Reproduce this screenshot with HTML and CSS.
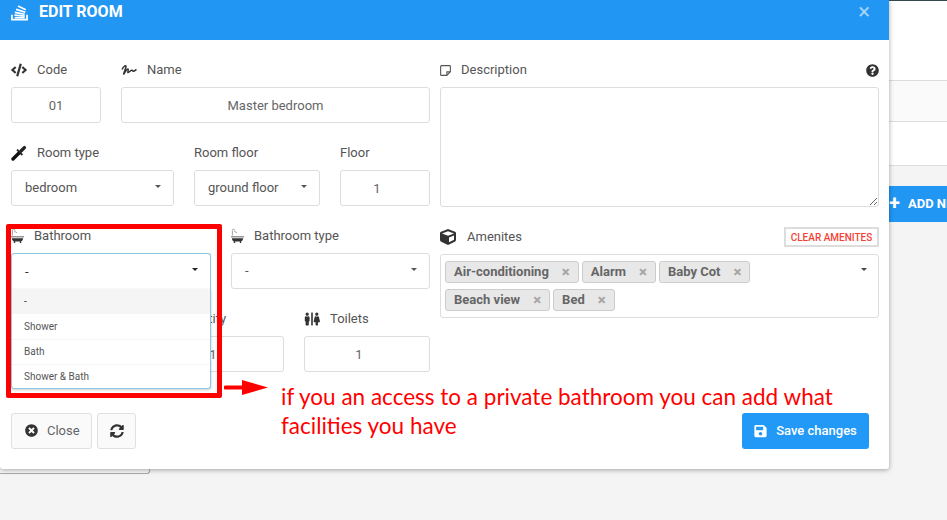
FILE: index.html
```html
<!DOCTYPE html>
<html lang="en">
<head>
<meta charset="utf-8">
<title>Edit room</title>
<link rel="stylesheet" href="styles.css">
</head>
<body>
<div class="stage">
  <div class="main">
    <section class="modal">
      <header class="modal-head">
        <svg class="head-icon" viewBox="0 0 18 17"><path d="M1 11v5h16v-5" fill="none" stroke="#fff" stroke-width="1.8"/><path d="M4 14h10.500M3.600 11.300l11 1M4 8.400l10.600 2M5.400 5.200l9.800 3M7.400 1.600l8.200 4" fill="none" stroke="#fff" stroke-width="1.700"/></svg>
        <h1 class="modal-title">EDIT ROOM</h1>
        <span class="modal-close">×</span>
      </header>
      <div class="modal-body">
        <div class="columns">
          <div class="col-left">
            <div class="row">
              <div class="field w90">
                <div class="label"><svg class="ico" viewBox="0 0 640 512"><path d="M278.9 511.5l-61-17.7c-6.4-1.8-10-8.5-8.2-14.9L346.2 8.7c1.8-6.4 8.5-10 14.9-8.2l61 17.7c6.4 1.8 10 8.5 8.2 14.9L293.8 503.3c-1.9 6.4-8.5 10.1-14.9 8.2zm-114-112.2l43.5-46.4c4.6-4.9 4.3-12.7-.8-17.2L117 256l90.6-79.7c5.1-4.5 5.5-12.3.8-17.2l-43.5-46.4c-4.5-4.8-12.1-5.1-17-.5L3.8 247.2c-5.1 4.7-5.1 12.8 0 17.5l144.1 135.1c4.9 4.6 12.5 4.4 17-.5zm327.2.6l144.1-135.1c5.1-4.7 5.1-12.8 0-17.5L492.1 112.1c-4.8-4.5-12.4-4.3-17 .5L431.6 159c-4.6 4.9-4.3 12.7.8 17.2L523 256l-90.6 79.7c-5.1 4.5-5.5 12.3-.8 17.2l43.5 46.4c4.5 4.9 12.1 5.1 17 .6z"/></svg><span>Code</span></div>
                <div class="box center">01</div>
              </div>
              <div class="field grow">
                <div class="label"><svg class="ico" viewBox="0 0 16 12"><path d="M1 5.500C2.500 2.500 4.500 1 5 2S3 8 2.500 10.500C4 8 6 4.500 7 5s-.8 3.500 0 3.500S10 6 11 6.200s.6 1.300 1.500 1S14.500 6 15.500 5.500" fill="none" stroke="#333" stroke-width="1.500"/></svg><span>Name</span></div>
                <div class="box center">Master bedroom</div>
              </div>
            </div>
            <div class="row">
              <div class="field w163">
                <div class="label"><svg class="ico-drop" viewBox="0 0 16 16"><path d="M2 14L8 8" stroke="#111" stroke-width="3.400" stroke-linecap="round" fill="none"/><path d="M6 4.600l5.400 5.400" stroke="#222" stroke-width="1.800" fill="none"/><path d="M10 6l3.400-3.400" stroke="#222" stroke-width="3.400" stroke-linecap="round" fill="none"/></svg><span>Room type</span></div>
                <div class="box select">bedroom<i class="caret"></i></div>
              </div>
              <div class="field w126">
                <div class="label"><span>Room floor</span></div>
                <div class="box select">ground floor<i class="caret"></i></div>
              </div>
              <div class="field grow">
                <div class="label"><span>Floor</span></div>
                <div class="box center number">1</div>
              </div>
            </div>
            <div class="row">
              <div class="field w200">
                <div class="label bath"><svg class="ico-bath" viewBox="0 0 14 16"><path d="M1.500 8V2.500a1.300 1.300 0 0 1 2.600 0" fill="none" stroke="#999" stroke-width="1"/><path d="M3.500 3.500l3 1.500" stroke="#999" fill="none"/><path d="M0 9h14v1H0zM1 11h12c0 2-1 3.500-3 3.500H4C2 14.500 1 13 1 11zM3 14.500h1.500V16H3zM9.500 14.500H11V16H9.500z" fill="#333"/></svg><span>Bathroom</span></div>
                <div class="box select focus">-<i class="caret dark"></i></div>
                <ul class="menu">
                  <li class="menu-item active">-</li>
                  <li class="menu-item">Shower</li>
                  <li class="menu-item">Bath</li>
                  <li class="menu-item">Shower &amp; Bath</li>
                </ul>
              </div>
              <div class="field grow">
                <div class="label bath"><svg class="ico-bath" viewBox="0 0 14 16"><path d="M1.500 8V2.500a1.300 1.300 0 0 1 2.600 0" fill="none" stroke="#999" stroke-width="1"/><path d="M3.500 3.500l3 1.500" stroke="#999" fill="none"/><path d="M0 9h14v1H0zM1 11h12c0 2-1 3.500-3 3.500H4C2 14.500 1 13 1 11zM3 14.500h1.500V16H3zM9.500 14.500H11V16H9.500z" fill="#333"/></svg><span>Bathroom type</span></div>
                <div class="box select">-<i class="caret"></i></div>
              </div>
            </div>
            <div class="row">
              <div class="field w127">
                <div class="label"></div>
                <div class="box center number"></div>
              </div>
              <div class="field w126">
                <div class="label qty"><span>Quantity</span></div>
                <div class="box center number">1</div>
              </div>
              <div class="field grow">
                <div class="label"><svg class="ico" viewBox="0 0 640 512"><path d="M128 128c35.300 0 64-28.700 64-64S163.300 0 128 0 64 28.700 64 64s28.700 64 64 64zm384 0c35.300 0 64-28.700 64-64S547.300 0 512 0s-64 28.700-64 64 28.700 64 64 64zm127.300 226.500l-45.600-185.800c-3.300-13.500-15.500-23-29.800-24.200-15 9.700-32.800 15.500-52 15.500-19.200 0-37-5.800-52-15.500-14.300 1.200-26.500 10.700-29.800 24.200l-45.600 185.800C381 369.600 393 384 409.200 384H464v104c0 13.300 10.700 24 24 24h48c13.300 0 24-10.700 24-24V384h54.800c16.200 0 28.200-14.400 24.500-29.500zM336 0h-32c-8.800 0-16 7.200-16 16v480c0 8.800 7.200 16 16 16h32c8.800 0 16-7.200 16-16V16c0-8.800-7.200-16-16-16zM180.100 144.400c-15 9.800-32.900 15.600-52.100 15.600-19.200 0-37.100-5.800-52.100-15.600C51.300 146.500 32 166.900 32 192v136c0 13.300 10.700 24 24 24h8v136c0 13.300 10.700 24 24 24h80c13.300 0 24-10.700 24-24V352h8c13.300 0 24-10.700 24-24V192c0-25.100-19.300-45.500-43.900-47.600z"/></svg><span>Toilets</span></div>
                <div class="box center number">1</div>
              </div>
            </div>
          </div>
          <div class="col-right">
            <div class="field">
              <div class="label spread">
                <span class="label-main"><svg class="ico-note" viewBox="0 0 12 12"><path d="M1.500.7h9a.8.8 0 0 1 .8.800V7.500L7.500 11.300h-6a.8.8 0 0 1-.8-.8v-9a.8.8 0 0 1 .8-.8zM11 7.500H7.500V11" fill="none" stroke="#555" stroke-width="1.200"/></svg><span>Description</span></span>
                <svg class="ico-help" viewBox="0 0 512 512"><path d="M504 256c0 136.997-111.043 248-248 248S8 392.997 8 256C8 119.083 119.043 8 256 8s248 111.083 248 248zM262.655 90c-54.497 0-89.255 22.957-116.549 63.758-3.536 5.286-2.353 12.415 2.715 16.258l34.699 26.310c5.205 3.947 12.621 3.008 16.665-2.122 17.864-22.658 30.113-35.797 57.303-35.797 20.429 0 45.698 13.148 45.698 32.958 0 14.976-12.363 22.667-32.534 33.976C247.128 238.528 216 254.941 216 296v4c0 6.627 5.373 12 12 12h56c6.627 0 12-5.373 12-12v-1.333c0-28.462 83.186-29.647 83.186-106.667 0-58.002-60.165-102-116.531-102zM256 338c-25.365 0-46 20.635-46 46 0 25.364 20.635 46 46 46s46-20.636 46-46c0-25.365-20.635-46-46-46z"/></svg>
              </div>
              <textarea class="notes"></textarea>
            </div>
            <div class="field">
              <div class="label spread">
                <span class="label-main wide"><svg class="ico" viewBox="0 0 512 512"><path d="M239.100 6.300l-208 78c-18.700 7-31.100 25-31.100 45v225.100c0 18.200 10.300 34.800 26.500 42.900l208 104c13.500 6.800 29.400 6.800 42.900 0l208-104c16.300-8.100 26.500-24.800 26.500-42.900V129.300c0-20-12.400-37.900-31.100-44.900l-208-78C262 2.200 250 2.200 239.100 6.300zM256 68.400l192 72v1.100l-192 78-192-78v-1.100l192-72zm32 356V275.500l160-65v133.900l-160 80z"/></svg><span>Amenites</span></span>
                <span class="clear-btn">CLEAR AMENITES</span>
              </div>
              <div class="tags">
                <span class="tag">Air-conditioning<b class="x">×</b></span>
                <span class="tag">Alarm<b class="x">×</b></span>
                <span class="tag">Baby Cot<b class="x">×</b></span>
                <span class="tag">Beach view<b class="x">×</b></span>
                <span class="tag">Bed<b class="x">×</b></span>
                <i class="caret tags-caret"></i>
              </div>
            </div>
          </div>
        </div>
        <footer class="actions">
          <div class="actions-left">
            <button class="btn"><svg class="btn-ico" viewBox="0 0 512 512"><path d="M256 8C119 8 8 119 8 256s111 248 248 248 248-111 248-248S393 8 256 8zm121.600 313.100c4.700 4.700 4.700 12.300 0 17L338 377.600c-4.700 4.700-12.300 4.700-17 0L256 312l-65.100 65.600c-4.700 4.700-12.300 4.700-17 0L134.400 338c-4.700-4.700-4.700-12.300 0-17l65.600-65-65.600-65.100c-4.700-4.700-4.700-12.300 0-17l39.600-39.600c4.700-4.700 12.300-4.700 17 0l65 65.700 65.100-65.600c4.700-4.700 12.300-4.700 17 0l39.600 39.600c4.700 4.700 4.700 12.300 0 17L312 256l65.600 65.100z"/></svg>Close</button>
            <button class="btn square"><svg class="btn-ico solo" viewBox="0 0 512 512"><path d="M370.720 133.280C339.458 104.008 298.888 87.962 255.848 88c-77.458.068-144.328 53.178-162.791 126.850-1.344 5.363-6.122 9.150-11.651 9.150H24.103c-7.498 0-13.194-6.807-11.807-14.176C33.933 94.924 134.813 8 256 8c66.448 0 126.791 26.136 171.315 68.685L463.030 40.970C478.149 25.851 504 36.559 504 57.941V192c0 13.255-10.745 24-24 24H345.941c-21.382 0-32.090-25.851-16.971-40.971l41.750-41.749zM32 296h134.059c21.382 0 32.090 25.851 16.971 40.971l-41.750 41.750c31.262 29.273 71.835 45.319 114.876 45.280 77.418-.070 144.315-53.144 162.787-126.849 1.344-5.363 6.122-9.150 11.651-9.150h57.304c7.498 0 13.194 6.807 11.807 14.176C478.067 417.076 377.187 504 256 504c-66.448 0-126.791-26.136-171.315-68.685L48.970 471.030C33.851 486.149 8 475.441 8 454.059V320c0-13.255 10.745-24 24-24z"/></svg></button>
          </div>
          <button class="btn-primary"><svg class="save-ico" viewBox="0 0 448 512"><path d="M433.941 129.941l-83.882-83.882A48 48 0 0 0 316.118 32H48C21.490 32 0 53.490 0 80v352c0 26.510 21.490 48 48 48h352c26.510 0 48-21.490 48-48V163.882a48 48 0 0 0-14.059-33.941zM224 416c-35.346 0-64-28.654-64-64 0-35.346 28.654-64 64-64s64 28.654 64 64c0 35.346-28.654 64-64 64zm96-304.520V212c0 6.627-5.373 12-12 12H76c-6.627 0-12-5.373-12-12V108c0-6.627 5.373-12 12-12h228.520c3.183 0 6.235 1.264 8.485 3.515l3.480 3.480A11.996 11.996 0 0 1 320 111.480z"/></svg>Save changes</button>
        </footer>
      </div>
    </section>
    <div class="under-card"></div>
  </div>
  <aside class="behind">
    <div class="behind-top"></div>
    <div class="behind-row"></div>
    <div class="behind-row2"></div>
    <div class="add-btn"><span class="plus">+</span>ADD NEW</div>
  </aside>
</div>
<div class="mark-box"></div>
<svg class="mark-arrow" viewBox="0 0 44 15"><path d="M1.500 5.500H18V0l26 7.500L18 15V9.500H1.500a2 2 0 0 1 0-4z" fill="#f00"/></svg>
<div class="mark-note"><p class="note-line">if you an access to a private bathroom you can add what</p><p class="note-line">facilities you have</p></div>
</body>
</html>
```
FILE: styles.css
```css
* { box-sizing: border-box; }
html, body { margin: 0; height: 520px; overflow: hidden; }
body { position: relative; background: #f4f4f4; font: 13px/1.2 Roboto, sans-serif; color: #555; }
.stage { display: flex; width: 947px; height: 520px; overflow: hidden; }
.main { width: 889px; flex: none; position: relative; z-index: 2; }
.modal { height: 469px; background: #fff; border-radius: 0 0 3px 3px; box-shadow: 0 1px 5px rgba(0,0,0,.35); position: relative; z-index: 2; }
.modal-head { height: 40px; background: #2196f3; display: flex; align-items: flex-start; padding: 3px 19px 0 11px; color: #fff; }
.head-icon { width: 17px; height: 17px; margin-top: 1px; flex: none; }
.modal-title { margin: 0 0 0 11px; font: 700 16px/17px Roboto, sans-serif; flex: 1; }
.modal-close { font: 400 22px/18px Roboto, sans-serif; opacity: .6; }
.modal-body { padding: 20px 10px 0 11px; }
.columns { display: flex; gap: 10px; }
.col-left { width: 419px; display: flex; flex-direction: column; gap: 20px; }
.col-right { width: 439px; display: flex; flex-direction: column; gap: 20px; }
.row { display: flex; gap: 20px; }
.field { position: relative; min-width: 0; }
.grow { flex: 1; }
.w90 { width: 90px; }
.w126 { width: 126px; }
.w127 { width: 127px; }
.w163 { width: 163px; }
.w200 { width: 200px; }
.label { height: 20px; margin-bottom: 7px; display: flex; align-items: center; gap: 10px; color: #555; }
.label.qty { padding-left: 20px; }
.spread { justify-content: space-between; }
.label-main { display: flex; align-items: center; gap: 10px; }
.label-main.wide { gap: 11px; }
.ico { width: 16px; height: 16px; fill: #333; flex: none; }
.ico-drop { width: 16px; height: 16px; flex: none; }
.ico-bath { width: 13px; height: 15px; flex: none; margin-top: -2px; }
.ico-note { width: 11px; height: 11px; flex: none; }
.ico-help { width: 13px; height: 13px; fill: #333; }
.box { height: 36px; border: 1px solid #ddd; border-radius: 3px; background: #fff; display: flex; align-items: center; color: #666; }
.center { justify-content: center; padding-top: 1px; }
.number { padding-right: 16px; }
.select { padding: 0 13px; position: relative; color: #555; }
.focus { border-color: #8cc8e0; border-radius: 3px 3px 0 0; border-bottom: 0; z-index: 4; color: #333; }
.caret { position: absolute; right: 12px; top: 14px; width: 0; height: 0; border: 3px solid transparent; border-top: 3.500px solid #555; border-bottom: 0; }
.caret.dark { border-width: 3.500px; border-top-color: #222; border-bottom: 0; top: 14px; right: 12px; }
.menu { list-style: none; margin: 0; padding: 0; position: absolute; left: 0; right: 0; top: 63px; height: 100px; background: #fff; border: 1px solid #8cc8e0; border-top: 0; border-radius: 0 0 3px 3px; box-shadow: 0 1px 3px rgba(0,0,0,.2); z-index: 5; font-size: 10px; }
.menu-item { height: 25.300px; padding: 1px 12px 0; display: flex; align-items: center; color: #555; border-bottom: 1px solid #f5f5f5; }
.menu-item:last-child { border-bottom: 0; height: 24px; }
.active { background: #f5f5f5; color: #333; border-bottom: 0; }
.notes { display: block; width: 439px; height: 120px; border: 1px solid #ddd; border-radius: 3px; background: #fff; margin: 0; padding: 8px; outline: 0; font: inherit; }
.clear-btn { border: 2px solid #ddd; height: 20px; width: 95px; display: flex; align-items: center; justify-content: center; padding-top: 1px; color: #f44336; font-size: 10px; font-weight: 500; }
.tags { position: relative; height: 64px; border: 1px solid #ddd; border-radius: 3px; padding: 6px 120px 6px 4px; display: flex; flex-wrap: wrap; align-content: flex-start; gap: 6px 3px; }
.tag { height: 22px; padding: 0 8px; background: #e8e8e8; border: 1px solid #ccc; border-radius: 3px; display: flex; align-items: center; font-weight: 700; color: #666; font-size: 13px; }
.x { margin-left: 13px; color: #a6a6a6; font-size: 15px; font-weight: 900; line-height: 1; }
.tags-caret { top: 13px; right: 11px; border-top-color: #444; }
.actions { display: flex; justify-content: space-between; align-items: flex-start; margin-top: 41px; padding-right: 10px; }
.actions-left { display: flex; gap: 5px; }
.btn { height: 36px; width: 81px; padding: 0 0 1px 13px; border: 1px solid #e0e0e0; border-radius: 3px; background: #fafafa; color: #666; font: 13px Roboto, sans-serif; display: flex; align-items: center; gap: 9px; }
.btn.square { width: 39px; padding: 0; justify-content: center; }
.btn-ico { width: 13px; height: 13px; fill: #333; flex: none; }
.btn-ico.solo { width: 14px; height: 14px; }
.btn-primary { height: 36px; width: 127px; border: 0; border-radius: 3px; background: #2299f6; color: #fff; font: 500 13px Roboto, sans-serif; display: flex; align-items: center; justify-content: center; gap: 9px; padding: 0 0 1px; }
.save-ico { width: 13px; height: 14px; fill: #fff; flex: none; }
.under-card { width: 150px; height: 5px; background: #f9f9f9; border: 1px solid #aaa; border-width: 0 1px 1px 0; border-radius: 0 0 3px 0; }
.behind { width: 58px; flex: none; }
.behind-top { height: 81px; background: #fff; border-top: 1px solid #37474f; border-bottom: 1px solid #ddd; }
.behind-row { height: 41px; background: #fafafa; border-bottom: 1px solid #ddd; }
.behind-row2 { height: 44px; background: #fff; border-bottom: 1px solid #ddd; }
.add-btn { margin-top: 20px; height: 36px; background: #2196f3; color: #fff; font: 700 13px/35px Roboto, sans-serif; white-space: nowrap; overflow: hidden; display: flex; }
.plus { flex: none; width: 19px; padding-right: 9px; font-size: 20px; text-align: center; }
.mark-box { position: absolute; left: 6px; top: 224px; width: 216px; height: 174px; border: 5px solid #f00; border-radius: 2px; z-index: 6; pointer-events: none; }
.mark-arrow { position: absolute; left: 224px; top: 380px; width: 44px; height: 15px; z-index: 6; }
.mark-note { position: absolute; left: 281px; top: 383px; z-index: 6; color: #f00; font: 22.500px/28.500px Lato, sans-serif; }
.note-line { margin: 0; width: fit-content; white-space: nowrap; }
```
